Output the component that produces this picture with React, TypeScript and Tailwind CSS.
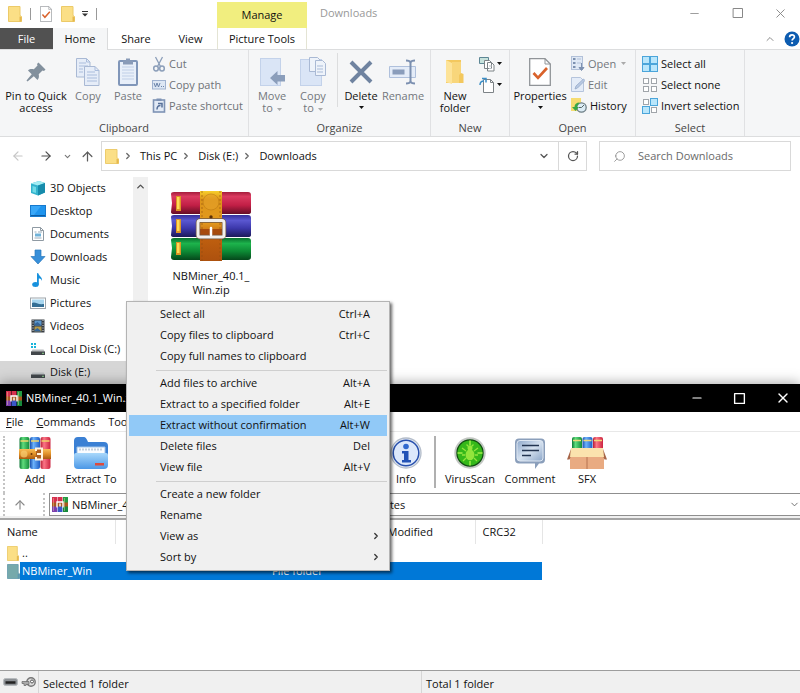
import type { ReactNode } from "react"
import { ArrowLeft, ArrowRight, ArrowUp, ChevronDown, ChevronRight, ChevronUp, Minus, RotateCw, Search, Square, X } from "lucide-react"

const places = [
  { name: "3D Objects", icon: <CubeIcon /> },
  { name: "Desktop", icon: <DesktopIcon /> },
  { name: "Documents", icon: <DocumentIcon /> },
  { name: "Downloads", icon: <DownloadIcon /> },
  { name: "Music", icon: <MusicIcon /> },
  { name: "Pictures", icon: <PictureIcon /> },
  { name: "Videos", icon: <VideoIcon /> },
  { name: "Local Disk (C:)", icon: <DiskIcon system /> },
  { name: "Disk (E:)", icon: <DiskIcon />, active: true },
]

const menuGroups = [
  [
    { label: "Select all", keys: "Ctrl+A" },
    { label: "Copy files to clipboard", keys: "Ctrl+C" },
    { label: "Copy full names to clipboard" },
  ],
  [
    { label: "Add files to archive", keys: "Alt+A" },
    { label: "Extract to a specified folder", keys: "Alt+E" },
    { label: "Extract without confirmation", keys: "Alt+W", active: true },
    { label: "Delete files", keys: "Del" },
    { label: "View file", keys: "Alt+V" },
  ],
  [
    { label: "Create a new folder" },
    { label: "Rename" },
    { label: "View as", sub: true },
    { label: "Sort by", sub: true },
  ],
]

export default function App() {
  return (
    <main className="relative flex min-h-screen flex-col overflow-hidden bg-white font-['Open_Sans','Noto_Sans',sans-serif] text-[11px] leading-3 text-[#111]">
      <Explorer />
      <Archiver />
      <ContextMenu />
    </main>
  )
}

/* ---------- file explorer ---------- */

function Explorer() {
  return (
    <section className="flex flex-col">
      <header className="flex h-7 items-start">
        <div className="flex h-7 w-[217px] items-center pl-2">
          <FolderIcon className="h-4 w-[14px]" />
          <span className="ml-2 h-3 w-px bg-[#999]" />
          <button aria-label="Properties" className="ml-[9px]">
            <CheckDocIcon className="h-4 w-3" />
          </button>
          <button aria-label="New folder" className="ml-[9px]">
            <FolderIcon className="h-4 w-[14px]" />
          </button>
          <button aria-label="Customize" className="ml-1.5">
            <svg viewBox="0 0 8 6" className="h-1.5 w-2">
              <path d="M1 .5h6" stroke="#333" />
              <path d="M1 2.500h6L4 5.500z" fill="#333" />
            </svg>
          </button>
          <span className="ml-[7px] h-3 w-px bg-[#999]" />
        </div>
        <div className="mt-0.5 flex h-[26px] w-[90px] items-center justify-center bg-[#f1ee7f]">Manage</div>
        <h1 className="flex h-[26px] flex-1 items-center pl-[13px] text-[#999]">Downloads</h1>
        <div className="-mr-0.5 flex h-[26px] text-[#888]">
          <WindowButton label="Minimize"><Minus size={13} strokeWidth={1.5} /></WindowButton>
          <WindowButton label="Maximize"><Square size={12} strokeWidth={2} className="[&_rect]:[rx:0]" /></WindowButton>
          <WindowButton label="Close"><X size={15} strokeWidth={1.5} /></WindowButton>
        </div>
      </header>

      <nav className="flex h-[21px]">
        <button className="w-[53px] bg-[#515151] text-white">File</button>
        <button className="z-10 -mb-px w-[55px] border-r border-[#dadbdc] bg-[#f5f6f7]">Home</button>
        <button className="w-14">Share</button>
        <button className="w-[53px]">View</button>
        <button className="w-[90px] border-x border-[#e4e4d4]">Picture Tools</button>
        <div className="flex flex-1 items-center justify-end gap-2">
          <button aria-label="Collapse ribbon">
            <ChevronUp size={12} strokeWidth={2} className="text-[#8c8c8c]" />
          </button>
          <button aria-label="Help">
            <svg viewBox="0 0 16 16" className="h-4 w-4">
              <circle cx="8" cy="8" r="7.500" fill="#0d5cb0" />
              <path d="M5.600 6.200c0-3.200 5-3.100 4.800-.2C10.300 7.700 8.100 7.600 8.100 9.600" fill="none" stroke="#fff" strokeWidth="1.700" />
              <circle cx="8.100" cy="12" r="1.100" fill="#fff" />
            </svg>
          </button>
        </div>
      </nav>

      <Ribbon />

      <div className="flex h-10 items-center pl-[11px] pr-[9px] pb-0.5">
        <button aria-label="Back" className="text-[#c6c6c6]"><ArrowLeft size={14} /></button>
        <button aria-label="Forward" className="ml-3.5 text-[#4d4d4d]"><ArrowRight size={14} /></button>
        <button aria-label="Recent locations" className="ml-2.5 text-[#777]"><ChevronDown size={9} strokeWidth={3} /></button>
        <button aria-label="Up" className="ml-2 text-[#5c5c5c]"><ArrowUp size={15} /></button>
        <div className="ml-1.5 flex h-[30px] flex-1 items-center border border-[#d9d9d9] pl-[3px]">
          <FolderIcon className="h-[15px] w-[14px]" />
          <Crumb label="This PC" />
          <Crumb label="Disk (E:)" />
          <Crumb label="Downloads" />
          <button aria-label="Previous locations" className="ml-auto flex w-7 justify-center text-[#555]"><ChevronDown size={12} strokeWidth={2.5} /></button>
          <button aria-label="Refresh" className="flex h-full w-7 items-center justify-center border-l border-[#d9d9d9] text-[#555]"><RotateCw size={12} strokeWidth={2.5} /></button>
        </div>
        <label className="ml-3 flex h-[30px] w-48 items-center border border-[#d9d9d9] pl-[13px]">
          <Search size={13} strokeWidth={1.5} className="-scale-x-100 text-[#888]" />
          <input aria-label="Search Downloads" placeholder="Search Downloads" className="ml-3 w-36 bg-transparent outline-none placeholder:text-[#6a6a6a]" />
        </label>
      </div>

      <div className="flex h-[207px]">
        <ul className="w-[133px]">
          {places.map((place) => (
            <li key={place.name}>
              <button className={`flex h-[23px] w-full items-center gap-1 pb-px pl-[30px] text-left whitespace-nowrap ${place.active ? "bg-[#d6d6d6]" : ""}`}>
                {place.icon}
                {place.name}
              </button>
            </li>
          ))}
        </ul>
        <div className="flex w-[15px] justify-center bg-[#f0f0f0] pt-1">
          <ChevronUp size={11} strokeWidth={3} className="text-[#505050]" />
        </div>
        <div className="flex-1 pl-[15px] pt-3.5">
          <button className="flex w-24 flex-col items-center text-center leading-[14px]">
            <ArchiveIcon className="mb-2 h-[70px] w-[84px]" />
            NBMiner_40.1_
            <br />
            Win.zip
          </button>
        </div>
      </div>
    </section>
  )
}

function WindowButton({ label, children }: { label: string; children: ReactNode }) {
  return (
    <button aria-label={label} className="flex w-[43px] items-center justify-center">
      {children}
    </button>
  )
}

function Crumb({ label }: { label: string }) {
  return (
    <>
      <ChevronRight size={10} strokeWidth={3} className="ml-1 mr-[7px] text-[#666]" />
      <button>{label}</button>
    </>
  )
}

function Ribbon() {
  return (
    <div className="flex h-[88px] border-y border-[#dcddde] bg-[#f5f6f7]">
      <Group title="Clipboard" className="w-[248px] pl-1">
        <BigButton label="Pin to Quick access" icon={<PinIcon />} className="w-16" />
        <BigButton label="Copy" icon={<CopyIcon />} className="w-10" muted />
        <BigButton label="Paste" icon={<PasteIcon />} className="w-10" muted />
        <div className="ml-1 text-[#6f7378]">
          <SmallButton label="Cut" icon={<CutIcon />} />
          <SmallButton label="Copy path" icon={<PathIcon />} />
          <SmallButton label="Paste shortcut" icon={<ShortcutIcon />} />
        </div>
      </Group>
      <Group title="Organize" className="w-[181px] pl-[3px]">
        <BigButton label="Move to" icon={<MoveIcon />} className="w-10 px-1" muted arrow />
        <BigButton label="Copy to" icon={<CopyToIcon />} className="w-[42px] px-1.5" muted arrow />
        <span className="mx-[3px] h-[54px] w-px bg-[#dcddde]" />
        <BigButton label="Delete" icon={<DeleteIcon />} className="w-10" arrow />
        <BigButton label="Rename" icon={<RenameIcon />} className="w-[44px]" muted />
      </Group>
      <Group title="New" className="w-[78px]">
        <BigButton label="New folder" icon={<OpenFolderIcon />} className="w-12 px-1" />
        <div>
          <button aria-label="New item" className="flex h-[21px] items-center gap-0.5"><NewItemIcon /><Caret /></button>
          <button aria-label="Easy access" className="flex h-[21px] items-center gap-0.5"><EasyAccessIcon /><Caret /></button>
        </div>
      </Group>
      <Group title="Open" className="w-[125px]">
        <BigButton label="Properties" icon={<CheckDocIcon className="h-7 w-[22px]" />} className="w-[60px]" arrow />
        <div className="ml-px">
          <SmallButton label="Open" icon={<OpenIcon />} muted arrow />
          <SmallButton label="Edit" icon={<EditIcon />} muted />
          <SmallButton label="History" icon={<HistoryIcon />} />
        </div>
      </Group>
      <Group title="Select" className="w-[108px] pl-1.5">
        <div>
          <SmallButton label="Select all" icon={<GridIcon kind="all" />} />
          <SmallButton label="Select none" icon={<GridIcon kind="none" />} />
          <SmallButton label="Invert selection" icon={<GridIcon kind="invert" />} />
        </div>
      </Group>
    </div>
  )
}

function Group({ title, className, children }: { title: string; className: string; children: ReactNode }) {
  return (
    <div className="flex flex-col border-r border-[#e0e1e3]">
      <div className={`flex flex-1 pt-[3px] ${className}`}>{children}</div>
      <div className="flex h-[17px] items-center justify-center text-[#454545]">{title}</div>
    </div>
  )
}

function BigButton({ label, icon, className, muted, arrow }: { label: string; icon: ReactNode; className: string; muted?: boolean; arrow?: boolean }) {
  const twoLines = label.endsWith(" to")
  return (
    <button className={`flex flex-col items-center pt-1 ${muted ? "text-[#73777c]" : ""} ${className}`}>
      <span className="mb-[3px] flex h-[30px] items-center">{icon}</span>
      <span>
        {label}
        {arrow && twoLines && <Caret className="ml-1 inline-block text-[#aaa]" />}
      </span>
      {arrow && !twoLines && <Caret className="mt-1" />}
    </button>
  )
}

function SmallButton({ label, icon, muted, arrow }: { label: string; icon: ReactNode; muted?: boolean; arrow?: boolean }) {
  return (
    <button className={`flex h-[21px] items-center gap-[3px] whitespace-nowrap ${muted ? "text-[#73777c]" : ""}`}>
      {icon}
      {label}
      {arrow && <Caret className="ml-0.5 text-[#aaa]" />}
    </button>
  )
}

function Caret({ className = "" }: { className?: string }) {
  return (
    <svg viewBox="0 0 5 3" className={`h-[3px] w-[5px] ${className}`}>
      <path d="M0 0h5L2.500 3z" fill="currentColor" />
    </svg>
  )
}

/* ---------- archiver ---------- */

function Archiver() {
  return (
    <section className="flex flex-1 flex-col shadow-[0_-1px_12px_rgba(0,0,0,0.35)]">
      <header className="flex h-7 items-center bg-black pl-1.5 text-white">
        <ArchiveBadge />
        <h2 className="ml-1 flex-1">NBMiner_40.1_Win.zip</h2>
        <div className="-mr-1 flex h-full">
          <WindowButton label="Minimize"><Minus size={14} /></WindowButton>
          <WindowButton label="Maximize"><Square size={13} strokeWidth={2.5} className="[&_rect]:[rx:0]" /></WindowButton>
          <WindowButton label="Close"><X size={16} /></WindowButton>
        </div>
      </header>

      <nav className="flex h-5 items-center gap-[13px] border-b border-[#e8e8e8] pl-1.5">
        <button><u>F</u>ile</button>
        <button><u>C</u>ommands</button>
        <button>Too<u>l</u>s</button>
      </nav>

      <div className="flex h-[61px] items-start pl-[3px] pt-1">
        <span className="h-[57px] border-l-2 border-dotted border-[#c4c4c4]" />
        <ToolButton label="Add" icon={<BooksIcon />} className="w-[60px]" />
        <ToolButton label="Extract To" icon={<ExtractIcon />} className="w-[52px]" />
        <span className="w-[265px]" />
        <ToolButton label="Info" icon={<InfoIcon />} className="w-12" />
        <span className="mx-1 h-[52px] w-0.5 bg-[#b0b0b0]" />
        <ToolButton label="VirusScan" icon={<VirusIcon />} className="w-[60px]" />
        <ToolButton label="Comment" icon={<CommentIcon />} className="w-[60px]" />
        <ToolButton label="SFX" icon={<SfxIcon />} className="w-[54px]" />
      </div>

      <div className="flex h-[23px] items-center pl-[3px]">
        <span className="h-full border-l-2 border-dotted border-[#c4c4c4]" />
        <button aria-label="Up one level" className="flex w-[30px] justify-center text-[#8a8a8a]"><ArrowUp size={14} /></button>
        <span className="ml-2 h-full border-l-2 border-dotted border-[#c4c4c4]" />
        <div className="ml-1 flex h-[23px] min-w-0 flex-1 items-center border border-r-0 border-[#8f8f8f] pl-0.5">
          <ArchiveBadge />
          <span className="ml-1 flex-1 whitespace-nowrap">NBMiner_40.1_Win.zip - ZIP archive, packed size 28,432,913 bytes</span>
          <button aria-label="Show path list"><ChevronDown size={11} strokeWidth={2} className="text-[#666]" /></button>
        </div>
      </div>
      <div className="h-1 border-b-2 border-[#a5a5a5] bg-[#f0f0f0]" />

      <div className="flex-1">
        <table className="w-[542px] table-fixed text-left">
          <colgroup>
            <col className="w-[115px]" />
            <col className="w-[150px]" />
            <col className="w-[115px]" />
            <col className="w-[95px]" />
            <col className="w-[67px]" />
          </colgroup>
          <thead>
            <tr className="h-6 [&>th]:border-r [&>th]:border-[#e5e5e5] [&>th]:pl-[7px] [&>th]:font-normal">
              <th>Name</th>
              <th />
              <th />
              <th>Modified</th>
              <th>CRC32</th>
            </tr>
          </thead>
          <tbody>
            <tr className="h-[18px]">
              <td colSpan={5} className="pl-[7px]">
                <span className="flex items-center gap-[3px]"><FolderIcon className="h-[15px] w-3" />..</span>
              </td>
            </tr>
            <tr className="h-[18px] text-white">
              <td colSpan={2} className="p-0">
                <span className="flex h-[18px] items-center">
                  <span className="flex w-5 justify-end"><FolderIcon className="h-[15px] w-[13px]" selected /></span>
                  <span className="flex h-full flex-1 items-center bg-[#0078d7] pl-0.5">NBMiner_Win</span>
                </span>
              </td>
              <td colSpan={3} className="bg-[#0078d7] pl-[7px]">File folder</td>
            </tr>
          </tbody>
        </table>
      </div>

      <footer className="flex h-[23px] items-center border-t border-[#9d9d9d] bg-[#f0f0f0] pl-[3px]">
        <svg viewBox="0 0 34 12" className="h-3 w-[34px]">
          <rect x=".5" y="2.500" width="14" height="7" rx="2" fill="#8c9094" stroke="#b6babd" />
          <path d="M2.500 6.500h10" stroke="#222" strokeWidth="2.500" />
          <circle cx="28" cy="6" r="4.200" fill="#ddd" stroke="#777" strokeWidth="1.400" />
          <circle cx="29" cy="5.500" r="1.500" fill="#fff" stroke="#555" />
          <path d="M19 5.500h7v3h-3v1h-2v-2h-2z" fill="#aaa" stroke="#666" strokeWidth=".7" />
        </svg>
        <span className="ml-px h-full w-px bg-[#d6d6d6]" />
        <span className="ml-1 w-[378px] pt-1">Selected 1 folder</span>
        <span className="h-full w-px bg-[#d6d6d6]" />
        <span className="ml-1 pt-1">Total 1 folder</span>
      </footer>
    </section>
  )
}

function ToolButton({ label, icon, className }: { label: string; icon: ReactNode; className: string }) {
  return (
    <button className={`flex flex-col items-center gap-1 whitespace-nowrap pt-px ${className}`}>
      <span className="flex h-8 items-center">{icon}</span>
      {label}
    </button>
  )
}

function ContextMenu() {
  return (
    <div role="menu" className="absolute left-[126px] top-[301px] z-20 w-[264px] border border-[#b4b4b4] bg-[#f0f0f0] px-0.5 py-0.5 shadow-[2px_2px_3px_rgba(0,0,0,0.6)]">
      {menuGroups.map((group, i) => (
        <div key={i}>
          {i > 0 && <div className="ml-[27px] flex h-1.5 items-center"><span className="h-px w-full bg-[#cfcfcf]" /></div>}
          {group.map((item) => (
            <button
              key={item.label}
              role="menuitem"
              className={`flex h-[21px] w-full items-center justify-between pb-0.5 pl-[31px] text-left ${item.sub ? "pr-1.5" : "pr-[17px]"} ${item.active ? "bg-[#91c9f7]" : ""}`}
            >
              <span>{item.label}</span>
              {item.keys && <span>{item.keys}</span>}
              {item.sub && <ChevronRight size={10} strokeWidth={3} className="text-[#333]" />}
            </button>
          ))}
        </div>
      ))}
    </div>
  )
}

/* ---------- icons ---------- */

function FolderIcon({ className, selected }: { className: string; selected?: boolean }) {
  return (
    <svg viewBox="0 0 14 16" preserveAspectRatio="none" className={className}>
      <path d="M.5.5h11.500v9l1.500 1v5H.5z" fill={selected ? "#76a9ab" : "#fbdf86"} stroke={selected ? "#6c9fae" : "#ecca68"} />
      <path d="M11.500 10.500l2 .5v4.500h-2z" fill={selected ? "#5d98b0" : "#e5b84e"} />
    </svg>
  )
}

function CheckDocIcon({ className }: { className: string }) {
  return (
    <svg viewBox="0 0 22 28" preserveAspectRatio="none" className={className}>
      <path d="M.700.700H16l5.300 5.300v21.300H.700z" fill="#fff" stroke="#909498" strokeWidth="1.300" />
      <path d="M16 .700V6h5.300" fill="none" stroke="#909498" />
      <path d="M4.500 15l4.500 4.800L18 10" fill="none" stroke="#d9622b" strokeWidth="2.700" />
    </svg>
  )
}

function PinIcon() {
  return (
    <svg viewBox="0 0 20 20" className="h-5 w-5">
      <path d="M12.500.5l7 7-1.500 1.500-1.500-.5-3.800 3.700c.6 2.500.2 4.300-1.200 5.800L7.800 14.300 1.500 19.500l-1-1L5.700 12.200 2 8.500c1.500-1.400 3.300-1.800 5.800-1.200l3.700-3.800L11 2z" fill="#82909d" />
    </svg>
  )
}

function CopyIcon() {
  return (
    <svg viewBox="0 0 24 28" className="h-7 w-6">
      <path d="M.5.5h10l3.500 3.500v15H.5z" fill="#e6edf8" stroke="#a9b9d4" />
      <path d="M3 5h7M3 8h9M3 11h4M3 14h4M10.500.5V4H14" fill="none" stroke="#aabddc" />
      <path d="M8.500 8.500h10.500l4 4v15H8.500z" fill="#e6edf8" stroke="#a9b9d4" />
      <path d="M11 14h8M11 17h10M11 20h10M11 23h10M19 8.500v4h4" fill="none" stroke="#aabddc" />
    </svg>
  )
}

function PasteIcon() {
  return (
    <svg viewBox="0 0 20 28" className="h-7 w-5">
      <rect x="1" y="3" width="18" height="24" rx="1" fill="#e8eff9" stroke="#8096b9" strokeWidth="2" />
      <path d="M4 9h12M4 12h12M4 15h12M4 18h12M4 21h12" stroke="#c0cfe7" />
      <path d="M5 2.500h3V.5h4v2h3v4H5z" fill="#899bb8" />
    </svg>
  )
}

function CutIcon() {
  return (
    <svg viewBox="0 0 14 16" className="h-4 w-[14px]">
      <path d="M3.500 1l5 9.500M10.500 1l-5 9.500" stroke="#8b9eb9" strokeWidth="1.300" />
      <g fill="none" stroke="#8b9eb9" strokeWidth="1.500">
        <ellipse cx="4" cy="12.500" rx="2.300" ry="2.500" />
        <ellipse cx="10" cy="12.500" rx="2.300" ry="2.500" />
      </g>
    </svg>
  )
}

function PathIcon() {
  return (
    <svg viewBox="0 0 14 10" className="h-[10px] w-[14px]">
      <rect x=".5" y=".5" width="13" height="8.500" fill="#dde7f4" stroke="#9fb2d0" />
      <path d="M2 3l1.500 4L5 3l1.500 4L8 3M9 6.500h1M11 6.500h1" fill="none" stroke="#6c84aa" />
    </svg>
  )
}

function ShortcutIcon() {
  return (
    <svg viewBox="0 0 14 15" className="h-[15px] w-[14px]">
      <rect x="1.500" y="2" width="11" height="12" fill="#e2eaf6" stroke="#7e93b5" strokeWidth="1.600" />
      <path d="M4.500.5h5v2.500h-5z" fill="#7e93b5" />
      <path d="M5 11.500c0-3 1-4 3.500-4M6 5.500h4v4" fill="none" stroke="#567099" strokeWidth="1.500" />
    </svg>
  )
}

function MoveIcon() {
  return (
    <svg viewBox="0 0 28 28" className="h-7 w-7">
      <rect x="2.500" y=".5" width="20" height="27" fill="#dae5f6" stroke="#c3d2ea" />
      <path d="M12 20l7.500-7v4H27v6.500h-7.500V27z" fill="#8b9ebb" />
    </svg>
  )
}

function CopyToIcon() {
  return (
    <svg viewBox="0 0 28 30" className="h-[30px] w-7">
      <rect x="1.500" y="2.500" width="21" height="26" fill="#dae5f6" stroke="#c3d2ea" />
      <g fill="#eef3fa" stroke="#a9b9d4">
        <path d="M10.500.5h8l3 3v11h-11z" />
        <path d="M16.500 3.500h7l3 3v12h-10z" />
      </g>
      <path d="M18 9h6M18 12h6M18 15h6" stroke="#a9bbd8" />
    </svg>
  )
}

function DeleteIcon() {
  return (
    <svg viewBox="0 0 24 24" className="h-6 w-6">
      <path d="M2 2l20 20M22 2L2 22" stroke="#6f83a0" strokeWidth="4" />
    </svg>
  )
}

function RenameIcon() {
  return (
    <svg viewBox="0 0 28 26" className="h-[26px] w-7">
      <path d="M.5 7.500h26v11H.5z" fill="#e4ecf8" stroke="#afc0dc" />
      <path d="M3.500 10.500h12v5h-12z" fill="#8a9dbb" />
      <path d="M17 1.500c3 0 4 .5 4.500 2 .5-1.500 1.500-2 4.500-2M21.500 3v20M17 24.500c3 0 4-.5 4.500-2 .5 1.500 1.500 2 4.500 2" fill="none" stroke="#7b8fb0" strokeWidth="2" />
    </svg>
  )
}

function OpenFolderIcon() {
  return (
    <svg viewBox="0 0 20 26" className="h-[26px] w-5">
      <path d="M1 1h15v13l2.500 1v9H1z" fill="#f3c85e" />
      <path d="M1 1l6 3v21l-6-2z" fill="#fde398" />
      <path d="M7 3h9v11l-2 2v8H7z" fill="#f8d67b" />
    </svg>
  )
}

function NewItemIcon() {
  return (
    <svg viewBox="0 0 16 16" className="h-4 w-4">
      <path d="M.5 1.500h9v6h-9z" fill="#c7e2dc" stroke="#5d8795" />
      <path d="M5.500 4.500h5l2 2v6h-7zM8.500 6.500h4l2.500 2.500v6H8.500z" fill="#fff" stroke="#7d8387" />
      <path d="M10 10h3M10 12.500h3" stroke="#b7bdc4" />
    </svg>
  )
}

function EasyAccessIcon() {
  return (
    <svg viewBox="0 0 16 16" className="h-4 w-4">
      <path d="M4.500 2.500h7l3 3v10h-10z" fill="#fff" stroke="#7d8387" />
      <path d="M11.500 2.500v3h3" fill="none" stroke="#7d8387" />
      <path d="M1 8c0-3 1-4 4-4M3 1.500h4v4" fill="none" stroke="#3c8fc7" strokeWidth="1.500" />
    </svg>
  )
}

function OpenIcon() {
  return (
    <svg viewBox="0 0 14 15" className="h-[15px] w-[14px]">
      <rect x=".5" y=".5" width="11" height="13" fill="#e0e9f5" stroke="#b2c1d9" />
      <path d="M2 3h2.500M2 7h2.500M2 11h2.500" stroke="#7d91b0" strokeWidth="2" />
      <path d="M6 3h4M6 7h4" stroke="#b2c1d9" />
      <path d="M10.500 7v5M8 11.500h5l-2.500 3z" stroke="#7d91b0" fill="#7d91b0" />
    </svg>
  )
}

function EditIcon() {
  return (
    <svg viewBox="0 0 14 15" className="h-[15px] w-[14px]">
      <path d="M.5.5h9l3 3v11H.5z" fill="#e4ecf8" stroke="#b5c4dc" />
      <path d="M4 12l1-3 7.500-7 1.500 1.500L6.500 11z" fill="#b8c9e3" stroke="#96a9c9" strokeWidth=".8" />
    </svg>
  )
}

function HistoryIcon() {
  return (
    <svg viewBox="0 0 16 15" className="h-[15px] w-4">
      <path d="M0 0h10v13H0z" fill="#f6dc71" />
      <circle cx="10.500" cy="9.500" r="4.700" fill="#dcecf5" stroke="#6c7d84" strokeWidth="1.300" />
      <path d="M10.500 9.500L13 7M10.500 9.500H8" stroke="#566" />
      <path d="M1 9h2.500c0-3 2-4.500 5-4.500l-1.500 2.500c-1 .5-1 1-1 2h2L4.500 13z" fill="#39a845" />
    </svg>
  )
}

function GridIcon({ kind }: { kind: "all" | "none" | "invert" }) {
  const cells = [
    { x: 1, y: 1, on: kind === "all" },
    { x: 9, y: 1, on: kind !== "none" },
    { x: 1, y: 9, on: kind !== "none" },
    { x: 9, y: 9, on: kind === "all" },
  ]
  return (
    <svg viewBox="0 0 16 16" className="h-4 w-4">
      {kind === "all" && <path d="M0 0h16v16H0z" fill="#3d9bd6" />}
      {cells.map((c) => (
        <rect
          key={`${c.x}-${c.y}`}
          x={c.on ? c.x - 0.5 : c.x + 0.5}
          y={c.on ? c.y - 0.5 : c.y + 0.5}
          width={c.on ? 7 : 5}
          height={c.on ? 7 : 5}
          fill={c.on ? "#b9e6fb" : "#fff"}
          stroke={c.on ? "#4ba5da" : "#a0a5aa"}
        />
      ))}
    </svg>
  )
}

function CubeIcon() {
  return (
    <svg viewBox="0 0 16 16" className="h-4 w-4">
      <path d="M1 3.500L9 1l6 2v9.500L8 15.500 1 13z" fill="#33b3cd" />
      <path d="M1 3.500L9 1l6 2-7 2.500z" fill="#a5edf3" />
      <path d="M8 5.500L15 3v9.500l-7 3z" fill="#168bab" />
      <path d="M2.500 6l3.500 1v6l-3.500-1z" fill="#71dae6" />
    </svg>
  )
}

function DesktopIcon() {
  return (
    <svg viewBox="0 0 16 16" className="h-4 w-4">
      <rect x=".5" y="2.500" width="15" height="11" fill="#1e94ee" stroke="#1679cd" />
      <path d="M1 12.500h14" stroke="#0c5da5" />
      <path d="M1 3h10L4 12H1z" fill="#38a7f8" />
    </svg>
  )
}

function DocumentIcon() {
  return (
    <svg viewBox="0 0 16 16" className="h-4 w-4">
      <path d="M2.500 1.500h8l3 3v10h-11z" fill="#fff" stroke="#8f9aa3" />
      <path d="M4.500 6h2M8 6h4M4.500 12h7" stroke="#9aabb9" />
      <path d="M5 7.500h6v3H5z" fill="#70b2d8" />
      <path d="M10.500 1.500v3h3" fill="none" stroke="#8f9aa3" />
    </svg>
  )
}

function DownloadIcon() {
  return (
    <svg viewBox="0 0 16 16" className="h-4 w-4">
      <path d="M5 1h6v6.500h4L8 15 1 7.500h4z" fill="#378fd9" stroke="#2a78bd" strokeWidth=".7" />
    </svg>
  )
}

function MusicIcon() {
  return (
    <svg viewBox="0 0 16 16" className="h-4 w-4">
      <ellipse cx="5.500" cy="12.500" rx="3.300" ry="2.500" fill="#1791dd" />
      <path d="M7 12.500V1l1.500.5c.5 3 4 3 3.500 7.500-.5-2-2-2.500-3.200-2.500v6z" fill="#1791dd" />
    </svg>
  )
}

function PictureIcon() {
  return (
    <svg viewBox="0 0 16 16" className="h-4 w-4">
      <rect x=".5" y="3" width="15" height="10.500" fill="#fff" stroke="#9da5ab" />
      <path d="M2 4.500h12v7.500H2z" fill="#a8d6ef" />
      <path d="M2 8c3-2 5 2 12 1v3H2z" fill="#356f95" />
    </svg>
  )
}

function VideoIcon() {
  return (
    <svg viewBox="0 0 16 16" className="h-4 w-4">
      <path d="M1.500 1.500h13v13h-13z" fill="#383e44" />
      <path d="M4.500 2.500h7v5h-7z" fill="#5c97cc" />
      <path d="M4.500 8.500h7v5h-7z" fill="#b49a49" />
      <path d="M4.500 6l3-2 4 3.500h-7zM4.500 12l3-2 4 3.500h-7z" fill="#34659a" />
      <path d="M3 2v12M13 2v12" stroke="#d9dde0" strokeDasharray="1 1.500" />
    </svg>
  )
}

function DiskIcon({ system }: { system?: boolean }) {
  return (
    <svg viewBox="0 0 16 16" className="h-4 w-4">
      <path d="M2.500 8.500h11L15 11H1z" fill="#b9bdc0" />
      <path d="M1 10.500h14V14H1z" fill="#42474b" />
      <path d="M12 12.300h2" stroke="#8ed18c" />
      {system && <path d="M1 2h2v2H1zM4 2h2v2H4zM1 5h2v2H1zM4 5h2v2H4z" fill="#18b5dc" />}
    </svg>
  )
}

function ArchiveIcon({ className }: { className: string }) {
  return (
    <svg viewBox="0 0 84 70" className={className}>
      <defs>
        <linearGradient id="red" x2="0" y2="1">
          <stop stopColor="#a51d3b" /><stop offset=".2" stopColor="#db3b60" /><stop offset=".6" stopColor="#c21f46" /><stop offset="1" stopColor="#650e25" />
        </linearGradient>
        <linearGradient id="blue" x2="0" y2="1">
          <stop stopColor="#34309a" /><stop offset=".25" stopColor="#5a57d0" /><stop offset=".6" stopColor="#3c38ab" /><stop offset="1" stopColor="#1c1958" />
        </linearGradient>
        <linearGradient id="green" x2="0" y2="1">
          <stop stopColor="#0a702d" /><stop offset=".25" stopColor="#1db34c" /><stop offset=".6" stopColor="#0d8b35" /><stop offset="1" stopColor="#05471b" />
        </linearGradient>
        <linearGradient id="strap" x2="0" y2="1">
          <stop stopColor="#f8d02c" /><stop offset=".12" stopColor="#dc9418" /><stop offset=".45" stopColor="#e39a1e" /><stop offset=".65" stopColor="#c0600f" /><stop offset="1" stopColor="#ad510e" />
        </linearGradient>
      </defs>
      <path d="M2 3q0-2 3-2h74q3 0 3 3v17q0 2-3 2H5q-3 0-3-2l1-9z" fill="url(#red)" />
      <path d="M2 26q0-2 3-2h74q3 0 3 3v17q0 2-3 2H5q-3 0-3-2l1-9z" fill="url(#blue)" />
      <path d="M2 49q0-2 3-2h74q3 0 3 3v16q0 3-3 3H5q-3 0-3-3l1-9z" fill="url(#green)" />
      <path d="M7 5h5v15H7zM7 28h5v14H7zM7 51h5v13H7z" fill="#dd9424" />
      <path d="M8 6h2.500v12H8zM8 29h2.500v11H8zM8 52h2.500v10H8z" fill="#ffdb55" />
      <path d="M31 0h22v70H31z" fill="url(#strap)" />
      <path d="M33 0v70M51 0v70" stroke="#8f4c0e" strokeDasharray="2 2" opacity=".6" />
      <circle cx="42" cy="11" r="8" fill="#e5a02a" stroke="#c07d16" opacity=".6" />
      <circle cx="42" cy="26" r="1.700" fill="#5c3009" />
      <path d="M31 38h22v7H31z" fill="#a64a0c" />
      <rect x="29" y="29.500" width="26" height="16.500" rx="2" fill="none" stroke="#6f5643" strokeWidth="4.500" />
      <rect x="29" y="29.500" width="26" height="16.500" rx="2" fill="none" stroke="#f2efec" strokeWidth="3" />
      <path d="M42 37v7" stroke="#fff" strokeWidth="2.500" strokeLinecap="round" />
    </svg>
  )
}

function ArchiveBadge() {
  return (
    <svg viewBox="0 0 16 15" className="h-[15px] w-4">
      <path d="M0 0h5v6H0zM5.500 0h5v6h-5z" fill="#d6304e" />
      <path d="M11 0h5v6h-5z" fill="#239c43" />
      <path d="M0 9h5v6H0z" fill="#7b3fae" />
      <path d="M5.500 9h5v6h-5z" fill="#3a58c8" />
      <path d="M11 9h5v6h-5z" fill="#168a3b" />
      <path d="M0 5.500h16v4H0z" fill="#a8591f" />
      <path d="M1.500 1v13M12.500 1v13" stroke="#f0d0a0" opacity=".45" />
      <path d="M5 10.500V5h6v5.500M8 6.500v3" fill="none" stroke="#fff" strokeWidth="1.400" />
    </svg>
  )
}

function BooksIcon() {
  return (
    <svg viewBox="0 0 32 32" className="h-8 w-8">
      <defs>
        <linearGradient id="bookGreen">
          <stop stopColor="#0d7a35" /><stop offset=".35" stopColor="#5fdc7c" /><stop offset="1" stopColor="#128a3a" />
        </linearGradient>
        <linearGradient id="bookBlue">
          <stop stopColor="#1a4fae" /><stop offset=".35" stopColor="#6cb2fb" /><stop offset="1" stopColor="#1e5cc4" />
        </linearGradient>
        <linearGradient id="bookRed">
          <stop stopColor="#b81c34" /><stop offset=".35" stopColor="#fb7686" /><stop offset="1" stopColor="#cc2440" />
        </linearGradient>
        <linearGradient id="belt" x2="0" y2="1">
          <stop stopColor="#f8bf58" /><stop offset=".5" stopColor="#e08f28" /><stop offset="1" stopColor="#a9590f" />
        </linearGradient>
      </defs>
      <rect x=".5" y="0" width="10" height="32" rx="2" fill="url(#bookGreen)" />
      <rect x="11" y="0" width="10" height="32" rx="2" fill="url(#bookBlue)" />
      <rect x="21.500" y="0" width="10" height="32" rx="2" fill="url(#bookRed)" />
      <path d="M1.500 4h8M12 4h8M22.500 4h8" stroke="#f1d66a" strokeWidth="1.500" />
      <path d="M0 12h32v10H0z" fill="url(#belt)" />
      <circle cx="5" cy="17" r="3.500" fill="#f9cf74" opacity=".7" />
      <circle cx="12.500" cy="17" r="1" fill="#6b3508" />
      <path d="M17 11.500h6v11h-6z" fill="#b06020" />
      <path d="M17 14v-2.500h6v11h-6V20M18 17h5" fill="none" stroke="#fff3df" strokeWidth="2" />
    </svg>
  )
}

function ExtractIcon() {
  return (
    <svg viewBox="0 0 36 34" className="h-[34px] w-9">
      <defs>
        <linearGradient id="pocket" x2="0" y2="1">
          <stop stopColor="#a9d8fb" /><stop offset="1" stopColor="#4a97e6" />
        </linearGradient>
      </defs>
      <path d="M1 5q0-4 4-4h6q2 0 4 5h16q4 0 4 4v19H1z" fill="#3b80d4" />
      <path d="M4 11h28v12H4z" fill="#fafcff" stroke="#a0c3e8" />
      <path d="M7 12.500v2M10 12.500v2M13 12.500v2M16 12.500v2M19 12.500v2M22 12.500v2M25 12.500v2M28 12.500v2" stroke="#8fa4bc" />
      <path d="M1 19q0-2 2-2h30q2 0 2 2v10q0 4-4 4H5q-4 0-4-4z" fill="url(#pocket)" />
      <rect x="22" y="27" width="9" height="2.500" fill="#dc4b3d" />
    </svg>
  )
}

function InfoIcon() {
  return (
    <svg viewBox="0 0 32 32" className="h-8 w-8">
      <circle cx="16" cy="16" r="15" fill="#e4ebf5" stroke="#b4bdca" strokeWidth="1.300" />
      <circle cx="16" cy="16" r="12.800" fill="#dce8fb" stroke="#2850ad" strokeWidth="1.500" />
      <circle cx="16" cy="9.500" r="2.800" fill="#3169ce" />
      <path d="M12 14h6.500v9H21v2.500h-9V23h2v-6.500h-2z" fill="#2353b6" />
    </svg>
  )
}

function VirusIcon() {
  return (
    <svg viewBox="0 0 32 32" className="h-8 w-8">
      <circle cx="16" cy="16" r="14.700" fill="#0f4d10" stroke="#c3c7c3" strokeWidth="2" />
      <circle cx="16" cy="16" r="12.500" fill="#35b81a" />
      <path d="M16 3.500v5M16 24v4.500M3.500 16h5M23.500 16h5" stroke="#a1ed4a" strokeWidth="1.500" />
      <path d="M12 14l-4-3M20 14l4-3M11 18H8M21 18h3M12 21l-3 3M20 21l3 3M14.500 9.500l-2-2M17.500 9.500l2-2" stroke="#92e53c" strokeWidth="1.300" />
      <ellipse cx="16" cy="17.800" rx="4.500" ry="5.500" fill="#92e53c" />
      <circle cx="16" cy="11" r="2.500" fill="#92e53c" />
    </svg>
  )
}

function CommentIcon() {
  return (
    <svg viewBox="0 0 32 32" className="h-8 w-8">
      <defs>
        <linearGradient id="bubble" x2="1" y2="1">
          <stop stopColor="#8fa9cb" /><stop offset=".5" stopColor="#d5e1ef" /><stop offset="1" stopColor="#8ca6c8" />
        </linearGradient>
      </defs>
      <path d="M5 1.500h22q4 0 4 4v17q0 4-4 4h-2l-4 5.500v-5.500H5q-4 0-4-4v-17q0-4 4-4z" fill="#8b9fbb" />
      <rect x="3" y="3.500" width="26" height="20.500" rx="3" fill="url(#bubble)" stroke="#dfe8f3" />
      <path d="M8 8.500h17M8 13.500h17M8 18.500h9" stroke="#233450" strokeWidth="1.700" />
    </svg>
  )
}

function SfxIcon() {
  return (
    <svg viewBox="0 0 40 34" className="h-[34px] w-10">
      <rect x="5" y="1" width="10" height="15" rx="2" fill="url(#bookGreen)" />
      <rect x="15.500" y="1" width="10" height="15" rx="2" fill="url(#bookBlue)" />
      <rect x="26" y="1" width="10" height="15" rx="2" fill="url(#bookRed)" />
      <path d="M6 4.500h8M16.500 4.500h8M27 4.500h8" stroke="#f3d778" strokeWidth="1.500" />
      <path d="M3 16h34v17H3z" fill="#e9ab82" />
      <path d="M4 13L0 23.500h2.500L5 18zM36 13l4 10.500h-2.500L35 18z" fill="#a76649" />
      <path d="M4 12h32l1 9H3z" fill="#fbe3ae" />
      <path d="M20 21v12" stroke="#b67250" />
    </svg>
  )
}
